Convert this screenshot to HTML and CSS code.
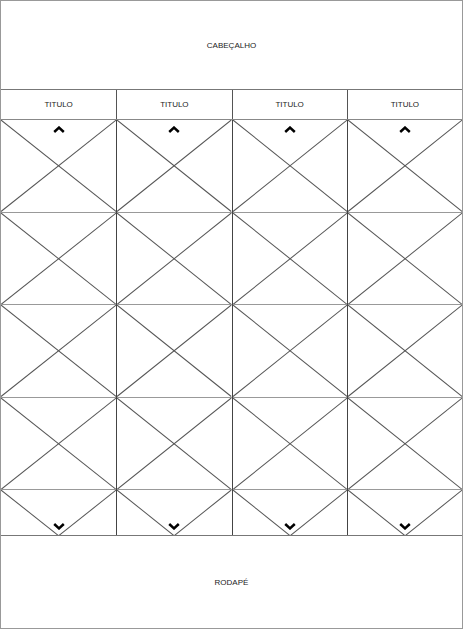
FILE: index.html
```html
<!DOCTYPE html>
<html lang="pt">

<head>
  <meta charset="UTF-8" />
  <meta name="viewport" content="width=device-width, initial-scale=1.0" />
  <title>Layout</title>
  <link rel="stylesheet" href="styles.css">
</head>

<body>
  <div class="frame">
    <header class="head">CABEÇALHO</header>

    <div class="titles">
      <div class="title">TITULO</div>
      <div class="title">TITULO</div>
      <div class="title">TITULO</div>
      <div class="title">TITULO</div>
    </div>

    <div class="list" id="list"></div>

    <footer class="foot">RODAPÉ</footer>
  </div>

  <script>
    const list = document.getElementById('list');
    const cross = `<svg class="cross" viewBox="0 0 100 100" preserveAspectRatio="none">
      <line x1="0" y1="0" x2="100" y2="100" vector-effect="non-scaling-stroke" />
      <line x1="100" y1="0" x2="0" y2="100" vector-effect="non-scaling-stroke" />
    </svg>`;
    const up = `<svg class="arrow up" viewBox="0 0 12 7"><polyline points="1.2,6 6,1.6 10.8,6" /></svg>`;
    const down = `<svg class="arrow down" viewBox="0 0 12 7"><polyline points="1.2,1 6,5.4 10.8,1" /></svg>`;

    for (let c = 0; c < 4; c++) {
      let html = '';
      for (let r = 0; r < 5; r++) {
        html += `<div class="cell">${cross}</div>`;
      }
      list.innerHTML += `<div class="col">${html}${up}${down}</div>`;
    }
  </script>
</body>

</html>
```

FILE: styles.css
```css
body {
  margin: 0;
  font-family: "Liberation Sans", Arial, sans-serif;
  background: white;
}

.frame {
  width: 461px;
  height: 627px;
  border: 1px solid #999;
  display: flex;
  flex-direction: column;
  color: #222;
  font-size: 8px;
}

.head {
  height: 88px;
  border-bottom: 1px solid #777;
  display: flex;
  align-items: center;
  justify-content: center;
}

.titles {
  height: 29px;
  border-bottom: 1px solid #888;
  display: grid;
  grid-template-columns: repeat(4, 1fr);
}

.title {
  display: flex;
  align-items: center;
  justify-content: center;
}

.title + .title {
  border-left: 1px solid #555;
}

.list {
  height: 415px;
  display: grid;
  grid-template-columns: repeat(4, 1fr);
  overflow: hidden;
}

.col {
  position: relative;
  overflow: hidden;
}

.col + .col {
  border-left: 1px solid #444;
}

.cell {
  height: 92.5px;
  border-bottom: 1px solid #999;
  box-sizing: border-box;
}

.cross {
  display: block;
  width: 100%;
  height: 100%;
}

.cross line {
  stroke: #555;
  stroke-width: 1;
}

.arrow {
  position: absolute;
  left: 50%;
  width: 12px;
  height: 7px;
  margin-left: -6px;
}

.arrow polyline {
  fill: none;
  stroke: #000;
  stroke-width: 2.5;
}

.arrow.up {
  top: 6px;
}

.arrow.down {
  bottom: 5px;
}

.foot {
  flex: 1;
  border-top: 1px solid #777;
  display: flex;
  align-items: center;
  justify-content: center;
}
```
